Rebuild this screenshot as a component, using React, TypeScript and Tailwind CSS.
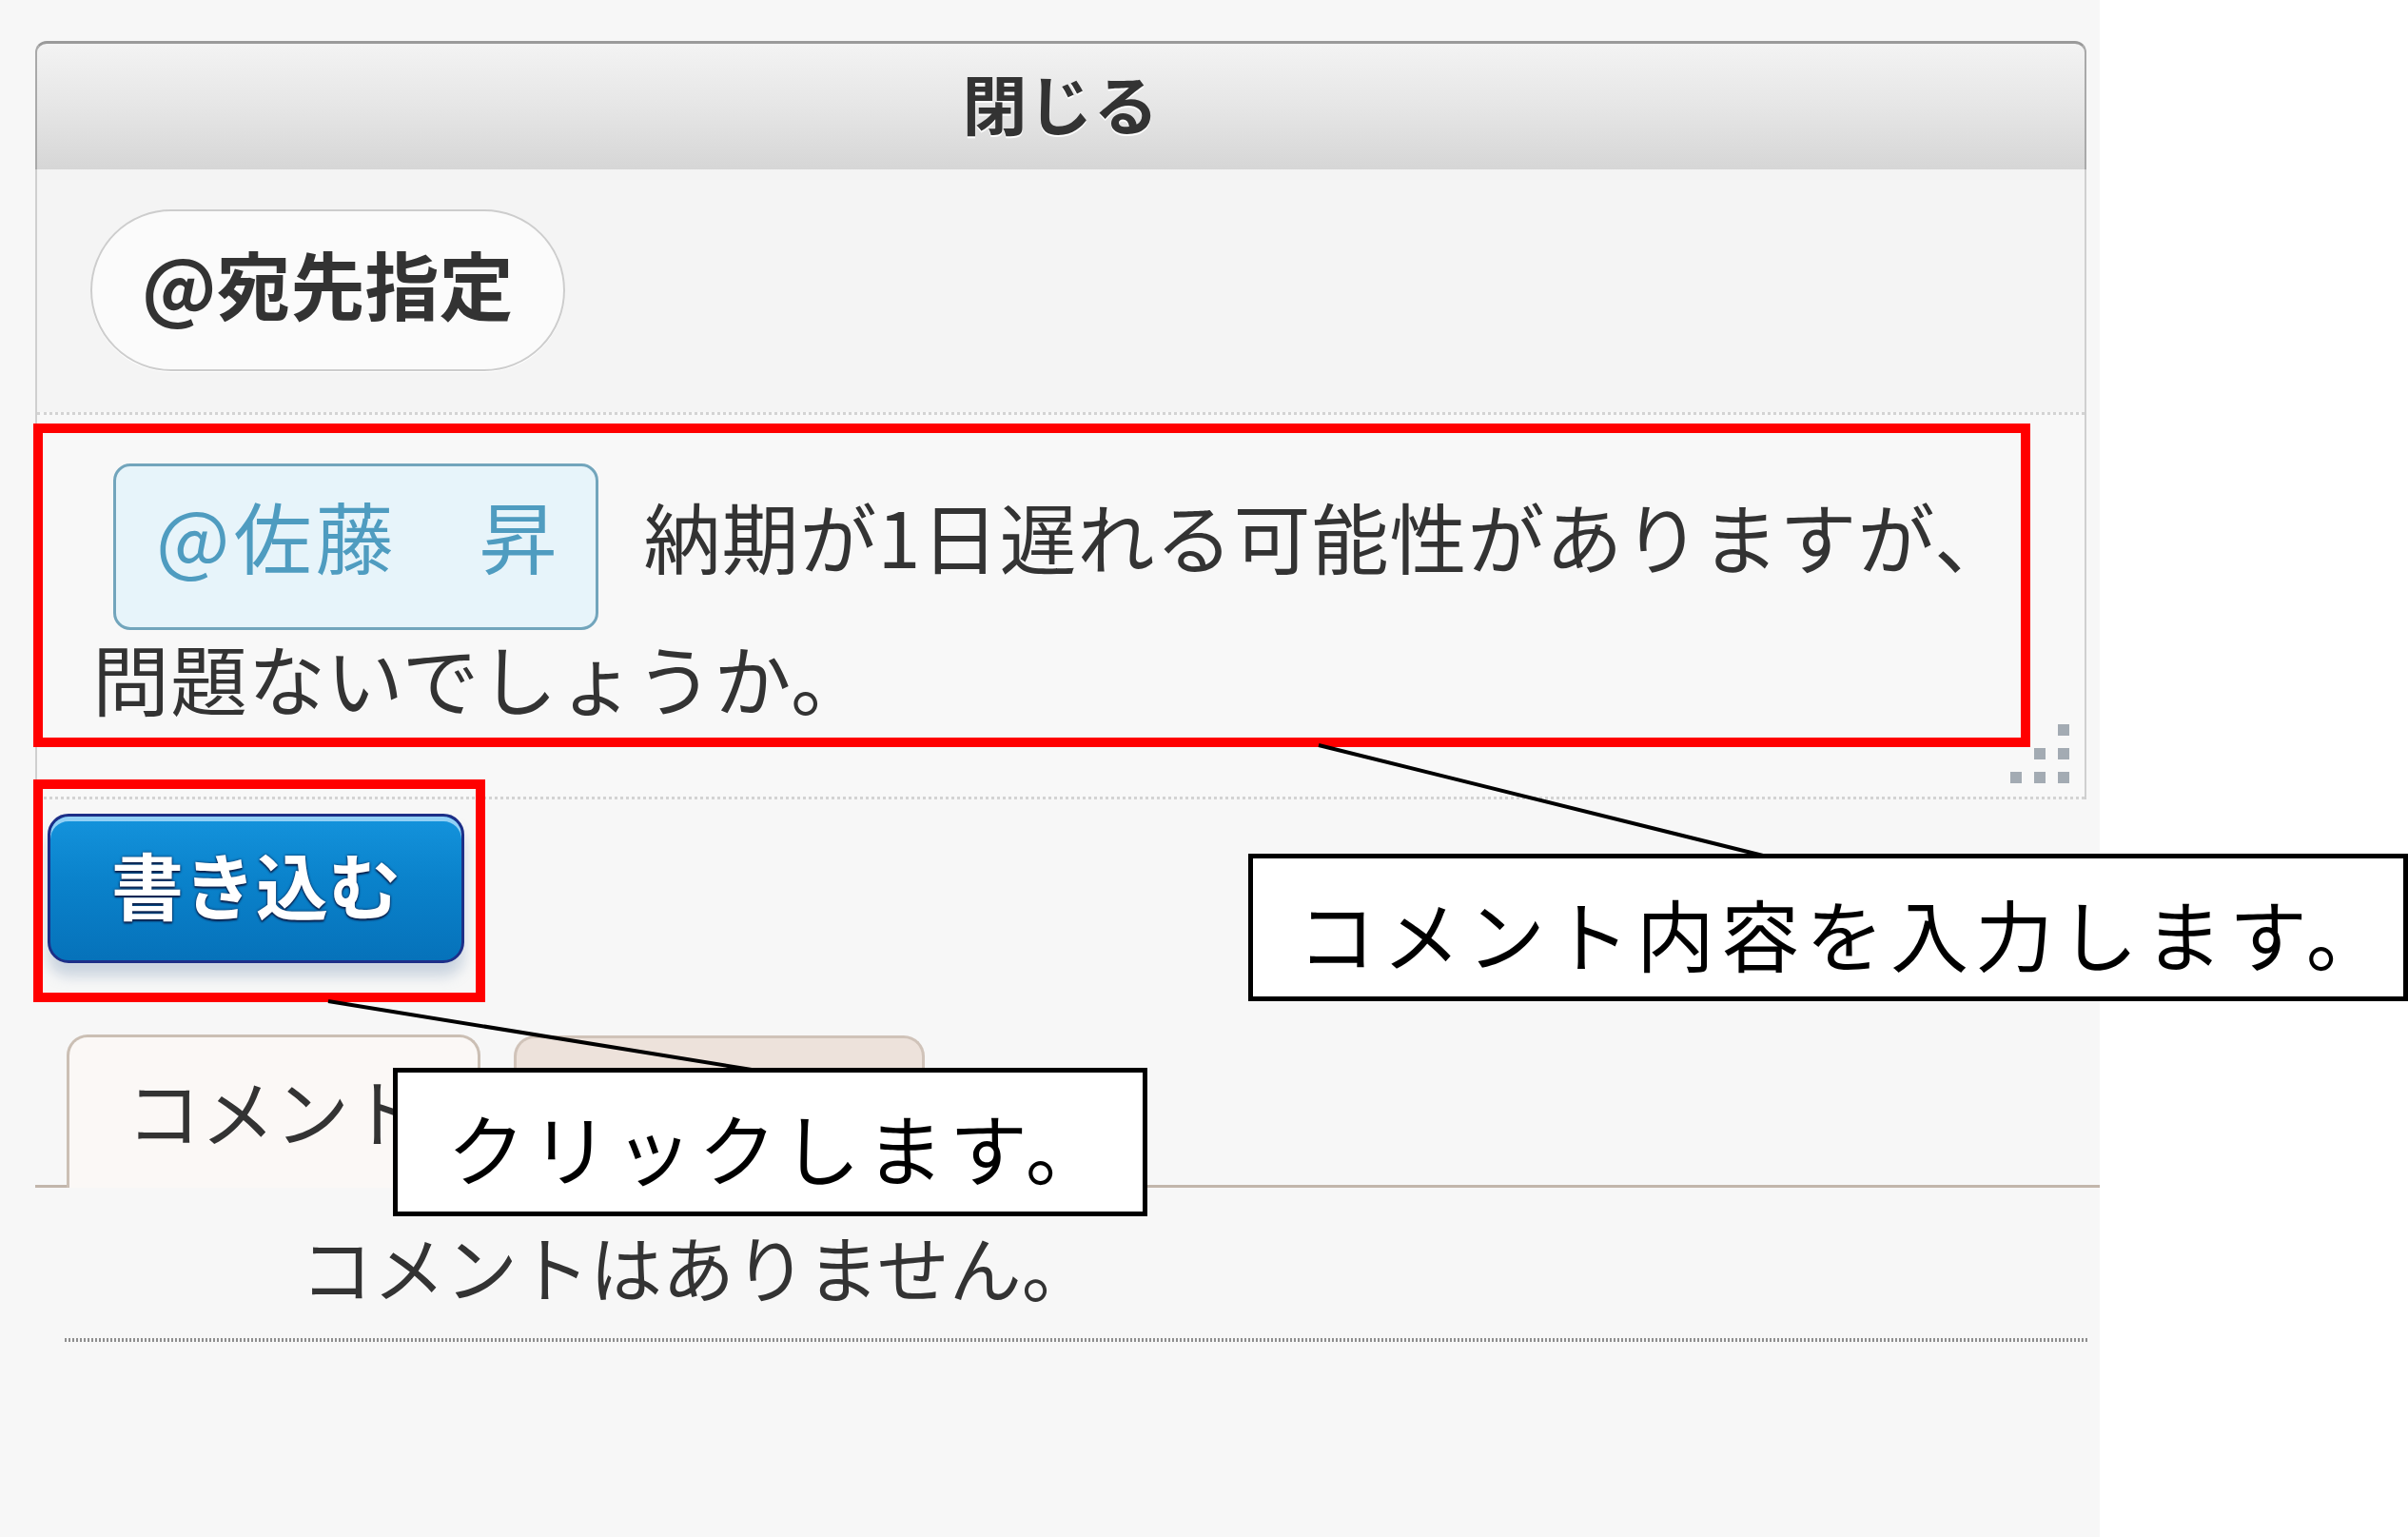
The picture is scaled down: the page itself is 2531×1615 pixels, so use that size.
import React from "react";

const JP = { fontFamily: '"Noto Sans CJK JP", "Noto Sans", sans-serif' };

function ResizeGrip() {
  return (
    <svg
      className="absolute right-[14px] bottom-[12px]"
      width="64"
      height="64"
      viewBox="0 0 64 64"
    >
      <rect x="50" y="0" width="12" height="12" fill="#a3abb3" />
      <rect x="25" y="25" width="12" height="12" fill="#a3abb3" />
      <rect x="50" y="25" width="12" height="12" fill="#a3abb3" />
      <rect x="0" y="50" width="12" height="12" fill="#a3abb3" />
      <rect x="25" y="50" width="12" height="12" fill="#a3abb3" />
      <rect x="50" y="50" width="12" height="12" fill="#a3abb3" />
    </svg>
  );
}

export default function App() {
  return (
    <div className="relative w-[2531px] h-[1615px] bg-white overflow-hidden" style={JP}>
      {/* page */}
      <div className="w-[2207px] h-[1615px] bg-[#f7f7f7] pt-[43px] text-[#333]">
        {/* panel */}
        <div className="ml-[37px] w-[2156px]">
          <div className="h-[135px] rounded-t-[12px] border-t-[3px] border-x-2 border-t-[#9a9a9a] border-x-[#a9a9a9] bg-[linear-gradient(180deg,#f3f3f3_0%,#e6e6e6_50%,#d6d6d6_100%)] flex items-center justify-center pb-[8px]">
            <span className="text-[68px] font-bold leading-none tracking-[1px] [text-shadow:0_2px_0_#ffffff]">閉じる</span>
          </div>
          <div className="border-x-2 border-[#cfcfcf] bg-[#f4f4f4]">
            <div className="h-[255px] pt-[42px] pl-[56px]">
              <div className="inline-flex items-center h-[170px] px-[52px] pb-[16px] rounded-full border-2 border-[#cdcdcd] bg-[#fbfbfb] text-[78px] font-bold leading-none text-[#333] shadow-[0_1px_0_#ffffff]">
                @宛先指定
              </div>
            </div>
            <div className="relative h-[407px] border-t-[3px] border-b-[3px] border-dotted border-[#d3d3d3] bg-[#f8f8f8] pl-[58px] pt-[51px]">
              <div className="flex items-center">
                <div className="ml-[22px] mr-[48px] h-[175px] pl-[42px] pr-[36px] pb-[26px] flex items-center rounded-[18px] border-[3px] border-[#72a5bc] bg-[#e7f4fa] text-[82px] tracking-[4px] leading-none text-[#4f9cc0]">
                  @佐藤　昇
                </div>
                <span className="mb-[26px] text-[81px] tracking-[1px] leading-none">納期が1日遅れる可能性がありますが、</span>
              </div>
              <div className="mt-[8px] text-[81px] tracking-[1px] leading-none">問題ないでしょうか。</div>
              <ResizeGrip />
            </div>
          </div>
        </div>

        {/* button */}
        <div className="pl-[50px] pt-[15px]">
          <button className="w-[438px] h-[157px] pb-[12px] rounded-[22px] border-[3px] border-[#1d2f88] bg-[linear-gradient(180deg,#1493dc_0%,#0a82cb_45%,#0672ba_100%)] shadow-[inset_0_5px_0_rgba(190,230,255,0.75),0_14px_14px_rgba(120,150,180,0.35)] flex items-center justify-center">
            <span className="text-[76px] font-bold leading-none text-white [text-shadow:0_0_3px_#0b1f4a,0_2px_2px_#0b1f4a]">書き込む</span>
          </button>
        </div>

        {/* tabs */}
        <div className="mt-[75px] ml-[37px] w-[2170px] border-b-[3px] border-[#c2b6ab] flex items-end gap-[35px] pl-[33px]">
          <div className="-mb-[3px] w-[435px] h-[161px] rounded-t-[22px] border-[3px] border-b-0 border-[#cbbfb4] bg-[#fbf8f6] flex items-center pl-[60px] pb-[6px]">
            <span className="text-[78px] leading-none">コメント</span>
          </div>
          <div className="w-[432px] h-[157px] rounded-t-[22px] border-[3px] border-b-0 border-[#d0c3b9] bg-[#ede2db]" />
        </div>

        {/* comments */}
        <div className="pl-[316px] pt-[44px] text-[76px] leading-none">コメントはありません。</div>
        <div className="ml-[68px] mt-[38px] w-[2127px] h-[4px] bg-[repeating-linear-gradient(90deg,#8f8f8f_0px,#8f8f8f_2px,transparent_2px,transparent_4px)]" />
      </div>

      {/* annotation overlay */}
      <div className="absolute left-[35px] top-[445px] w-[2099px] h-[340px] border-[10px] border-[#ff0000]" />
      <div className="absolute left-[35px] top-[819px] w-[475px] h-[234px] border-[10px] border-[#ff0000]" />
      <svg className="absolute left-0 top-0" width="2531" height="1615" viewBox="0 0 2531 1615">
        <line x1="1386" y1="783" x2="1853" y2="899" stroke="#000" strokeWidth="4" />
        <line x1="345" y1="1052" x2="790" y2="1124" stroke="#000" strokeWidth="4" />
      </svg>
      <div className="absolute left-[1312px] top-[897px] w-[1219px] h-[155px] border-[5px] border-black bg-white flex items-center pl-[47px] pt-[10px]">
        <span className="text-[82px] leading-none tracking-[7px] text-black">コメント内容を入力します。</span>
      </div>
      <div className="absolute left-[413px] top-[1122px] w-[793px] h-[156px] border-[5px] border-black bg-white flex items-center pl-[52px] pt-[10px]">
        <span className="text-[82px] leading-none tracking-[6px] text-black">クリックします。</span>
      </div>
    </div>
  );
}
